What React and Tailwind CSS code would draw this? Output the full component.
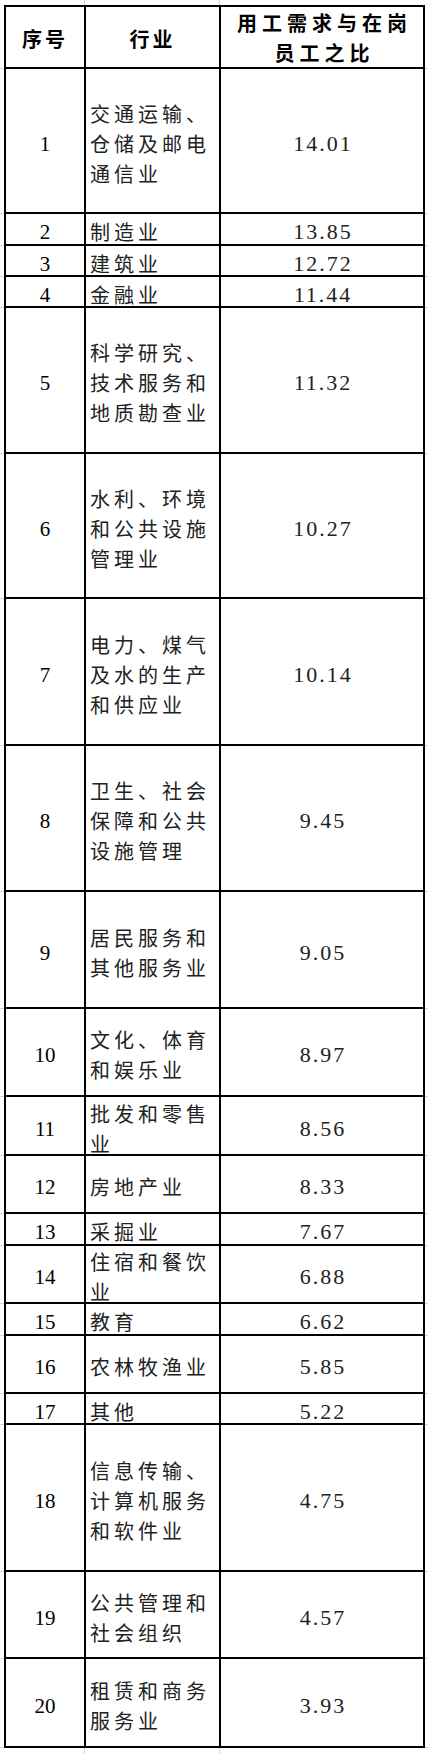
import React from "react";

const rows = [
  { no: "1", name: ["交通运输、", "仓储及邮电", "通信业"], val: "14.01", h: "h-[145px]" },
  { no: "2", name: ["制造业"], val: "13.85", h: "h-[32px]" },
  { no: "3", name: ["建筑业"], val: "12.72", h: "h-[31px]" },
  { no: "4", name: ["金融业"], val: "11.44", h: "h-[31px]" },
  { no: "5", name: ["科学研究、", "技术服务和", "地质勘查业"], val: "11.32", h: "h-[146px]" },
  { no: "6", name: ["水利、环境", "和公共设施", "管理业"], val: "10.27", h: "h-[145px]" },
  { no: "7", name: ["电力、煤气", "及水的生产", "和供应业"], val: "10.14", h: "h-[147px]" },
  { no: "8", name: ["卫生、社会", "保障和公共", "设施管理"], val: "9.45", h: "h-[146px]" },
  { no: "9", name: ["居民服务和", "其他服务业"], val: "9.05", h: "h-[117px]" },
  { no: "10", name: ["文化、体育", "和娱乐业"], val: "8.97", h: "h-[88px]" },
  { no: "11", name: ["批发和零售", "业"], val: "8.56", h: "h-[59px]" },
  { no: "12", name: ["房地产业"], val: "8.33", h: "h-[58px]" },
  { no: "13", name: ["采掘业"], val: "7.67", h: "h-[32px]" },
  { no: "14", name: ["住宿和餐饮", "业"], val: "6.88", h: "h-[58px]" },
  { no: "15", name: ["教育"], val: "6.62", h: "h-[32px]" },
  { no: "16", name: ["农林牧渔业"], val: "5.85", h: "h-[58px]" },
  { no: "17", name: ["其他"], val: "5.22", h: "h-[31px]" },
  { no: "18", name: ["信息传输、", "计算机服务", "和软件业"], val: "4.75", h: "h-[147px]" },
  { no: "19", name: ["公共管理和", "社会组织"], val: "4.57", h: "h-[87px]" },
  { no: "20", name: ["租赁和商务", "服务业"], val: "3.93", h: "h-[89px]" },
];

// faint spreadsheet grid around the table
const GridStrip = ({ h }) => (
  <div className={`flex ${h}`}>
    <div className="w-[85px] border-r border-[#d6d6d6]" />
    <div className="w-[135px] border-r border-[#d6d6d6]" />
  </div>
);

const Row = ({ h, children }) => (
  <div className={`flex ${h}`}>
    <div className="w-[4px] shrink-0 border-b border-[#d6d6d6]" />
    {children}
    <div className="w-[3px] shrink-0 border-b border-[#d6d6d6]" />
  </div>
);

export default function App() {
  const cjk = "font-['Noto_Sans_CJK_SC',sans-serif]";
  const serif = "font-['Liberation_Serif','Noto_Sans_CJK_SC',serif]";

  return (
    <div className="w-[428px] bg-white">
      <GridStrip h="h-[5px]" />

      {/* header */}
      <Row h="h-[64px]">
        <div className={`w-[82px] shrink-0 border-2 border-black flex items-center justify-center pt-[4px] ${cjk} font-bold text-[20px] tracking-[3px] text-black`}>
          序号
        </div>
        <div className={`w-[135px] shrink-0 border-y-2 border-r-2 border-black flex items-center justify-center pt-[4px] ${cjk} font-bold text-[20px] tracking-[3px] text-black`}>
          行业
        </div>
        <div className={`w-[204px] shrink-0 border-y-2 border-r-2 border-black flex flex-col items-center justify-center pt-[2px] pl-[5px] ${cjk} font-bold text-[20px] leading-[30px] tracking-[5px] text-black`}>
          <span>用工需求与在岗</span>
          <span>员工之比</span>
        </div>
      </Row>

      {rows.map((r) => (
        <Row key={r.no} h={r.h}>
          <div className={`w-[82px] shrink-0 border-x-2 border-b-2 border-black flex items-center justify-center pt-[6px] ${serif} text-[21px] leading-[30px] text-black`}>
            {r.no}
          </div>
          <div className={`w-[135px] shrink-0 border-r-2 border-b-2 border-black flex flex-col justify-center pt-[6px] pl-[4px] ${cjk} text-[20px] leading-[30px] tracking-[4px] text-[#222]`}>
            {r.name.map((line) => (
              <span key={line} className="whitespace-nowrap">
                {line}
              </span>
            ))}
          </div>
          <div className={`w-[204px] shrink-0 border-r-2 border-b-2 border-black flex items-center justify-center pt-[6px] pl-[2px] ${serif} text-[22px] leading-[30px] tracking-[2px] text-[#222]`}>
            {r.val}
          </div>
        </Row>
      ))}

      <GridStrip h="h-[6px]" />
    </div>
  );
}
